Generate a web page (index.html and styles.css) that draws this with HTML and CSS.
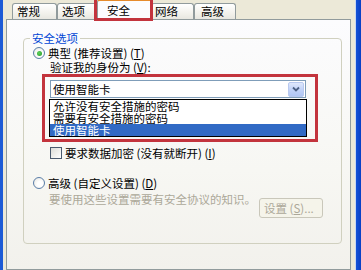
FILE: index.html
```html
<!DOCTYPE html>
<html lang="zh-CN">
<head>
<meta charset="utf-8">
<link rel="stylesheet" href="styles.css">
</head>
<body>
<div class="window">
  <div class="frame frame-l"></div>
  <div class="main">
    <div class="tabs">
      <div class="tab tab-a">常规</div>
      <div class="tab tab-b">选项</div>
      <div class="tab tab-sel">安全</div>
      <div class="tab tab-c">网络</div>
      <div class="tab tab-d">高级</div>
    </div>
    <div class="panel">
      <fieldset class="group">
        <legend class="legend">安全选项</legend>
        <div class="row row-radio">
          <span class="radio radio-on"></span>
          <span class="label">典型 (推荐设置) (<u>T</u>)</span>
        </div>
        <div class="row row-sub">验证我的身份为 (<u>V</u>):</div>
        <div class="combo">
          <span class="combo-text">使用智能卡</span>
          <span class="combo-btn">
            <svg width="8" height="6" viewBox="0 0 8 6"><path d="M1 1.5 L4 4.5 L7 1.5" fill="none" stroke="#4d6185" stroke-width="1.8"/></svg>
          </span>
        </div>
        <div class="list">
          <div class="item">允许没有安全措施的密码</div>
          <div class="item">需要有安全措施的密码</div>
          <div class="item item-sel">使用智能卡</div>
        </div>
        <div class="row row-check">
          <span class="check"></span>
          <span class="label">要求数据加密 (没有就断开) (<u>I</u>)</span>
        </div>
        <div class="row row-radio row-adv">
          <span class="radio"></span>
          <span class="label">高级 (自定义设置) (<u>D</u>)</span>
        </div>
        <div class="row-desc">
          <span class="desc">要使用这些设置需要有安全协议的知识。</span>
          <span class="btn">设置 (<u>S</u>)...</span>
        </div>
      </fieldset>
    </div>
  </div>
  <div class="frame frame-r"></div>
  <div class="mark mark-tab"></div>
  <div class="mark mark-combo"></div>
</div>
</body>
</html>
```

FILE: styles.css
```css
* { box-sizing: border-box; }
html, body { margin: 0; padding: 0; }
body {
  width: 361px;
  height: 270px;
  overflow: hidden;
  font-family: "Noto Sans CJK SC", "Noto Sans", sans-serif;
  font-size: 11.5px;
  color: #000;
}
u { text-decoration: underline; text-underline-offset: 1px; }
.window {
  position: relative;
  display: flex;
  width: 361px;
  height: 270px;
  background: #ece9d8;
}
.frame-l {
  width: 3px;
  background: #1d5bd6;
}
.frame-r {
  width: 6px;
  background: linear-gradient(90deg, #c9d6f0 0, #c9d6f0 1px, #1453d8 1px, #0a3fc4 100%);
}
.main {
  flex: 1;
  display: flex;
  flex-direction: column;
  padding: 0 4px 0 3px;
}
.tabs {
  height: 19px;
  display: flex;
  align-items: flex-end;
  padding-left: 6px;
  position: relative;
  z-index: 2;
}
.tab {
  height: 16px;
  border: 1px solid #919b9c;
  border-bottom: none;
  border-radius: 3px 3px 0 0;
  background: linear-gradient(#ffffff, #f3f2ec 60%, #e8e7e0);
  line-height: 15px;
  padding-left: 4px;
  white-space: nowrap;
}
.tab-a { width: 45px; }
.tab-b { width: 42px; }
.tab-c { width: 43px; padding-left: 3px; }
.tab-d { width: 42px; padding-left: 6px; }
.tab-sel {
  width: 56px;
  height: 21px;
  margin: 0 -2px -1px;
  padding-left: 9px;
  padding-top: 2px;
  background: #fcfcfe;
  border-top: 2px solid #e68b2c;
  position: relative;
  z-index: 1;
}
.panel {
  flex: 1;
  border: 1px solid #919b9c;
  background: linear-gradient(#fcfcfe, #f7f7f3 60%, #f2f1ec);
  padding: 11px 8px 0 16px;
}
.group {
  margin: 0;
  padding: 0 0 25px 0;
  border: 1px solid #d0d0bf;
  border-radius: 4px;
  min-width: 0;
}
.legend {
  margin-left: 6px;
  padding: 0 2px;
  line-height: 14px;
  color: #0046d5;
}
.row {
  display: flex;
  align-items: center;
  line-height: 14px;
  white-space: nowrap;
}
.row-radio {
  height: 14px;
  margin-top: 1px;
  padding-left: 9px;
}
.row-adv { margin-top: 16px; }
.radio {
  width: 12px;
  height: 12px;
  border-radius: 50%;
  border: 1px solid #5a7ea8;
  background: radial-gradient(circle at 60% 60%, #ffffff 30%, #e4e3dd 100%);
  margin-right: 3px;
  flex: none;
  display: flex;
  align-items: center;
  justify-content: center;
}
.radio-on::after {
  content: "";
  width: 5px;
  height: 5px;
  border-radius: 50%;
  background: radial-gradient(circle at 40% 40%, #5fd35f, #219421);
}
.row-sub {
  height: 14px;
  padding-left: 26px;
}
.combo {
  margin: 6px 0 0 26px;
  width: 256px;
  height: 18px;
  border: 1px solid #7f9db9;
  background: #fff;
  display: flex;
  align-items: center;
  justify-content: space-between;
  padding: 0 1px 0 2px;
}
.combo-text { line-height: 14px; }
.combo-btn {
  width: 16px;
  height: 15px;
  border: 1px solid #b9c9ef;
  border-radius: 2px;
  background: linear-gradient(#dfe8fc, #c2d3f8 50%, #b1c6f4);
  display: flex;
  align-items: center;
  justify-content: center;
}
.list {
  margin: 1px 0 0 25px;
  width: 258px;
  border: 1px solid #000;
  background: #fff;
}
.item {
  height: 12px;
  line-height: 12px;
  padding-left: 3px;
  white-space: nowrap;
}
.item-sel {
  background: #316ac5;
  color: #fff;
}
.row-check {
  height: 15px;
  margin-top: 8px;
  padding-left: 26px;
}
.check {
  width: 12px;
  height: 12px;
  border: 1px solid #4a5a6e;
  background: linear-gradient(135deg, #dcdcd7, #ffffff);
  margin-right: 3px;
  flex: none;
}
.row-desc {
  display: flex;
  align-items: flex-start;
  margin-top: 2px;
  padding-left: 25px;
  padding-right: 18px;
}
.desc {
  color: #aca899;
  line-height: 14px;
  white-space: nowrap;
}
.btn {
  margin-left: auto;
  margin-top: 6px;
  width: 64px;
  height: 20px;
  border: 1px solid #c9c7ba;
  border-radius: 3px;
  color: #aca899;
  line-height: 18px;
  padding-left: 4px;
  background: #f5f4ea;
  white-space: nowrap;
}
.mark {
  position: absolute;
  border: 3px solid #c3343d;
  z-index: 5;
}
.mark-tab {
  left: 94px;
  top: -3px;
  width: 59px;
  height: 24px;
}
.mark-combo {
  left: 42px;
  top: 74px;
  width: 276px;
  height: 68px;
}
```
